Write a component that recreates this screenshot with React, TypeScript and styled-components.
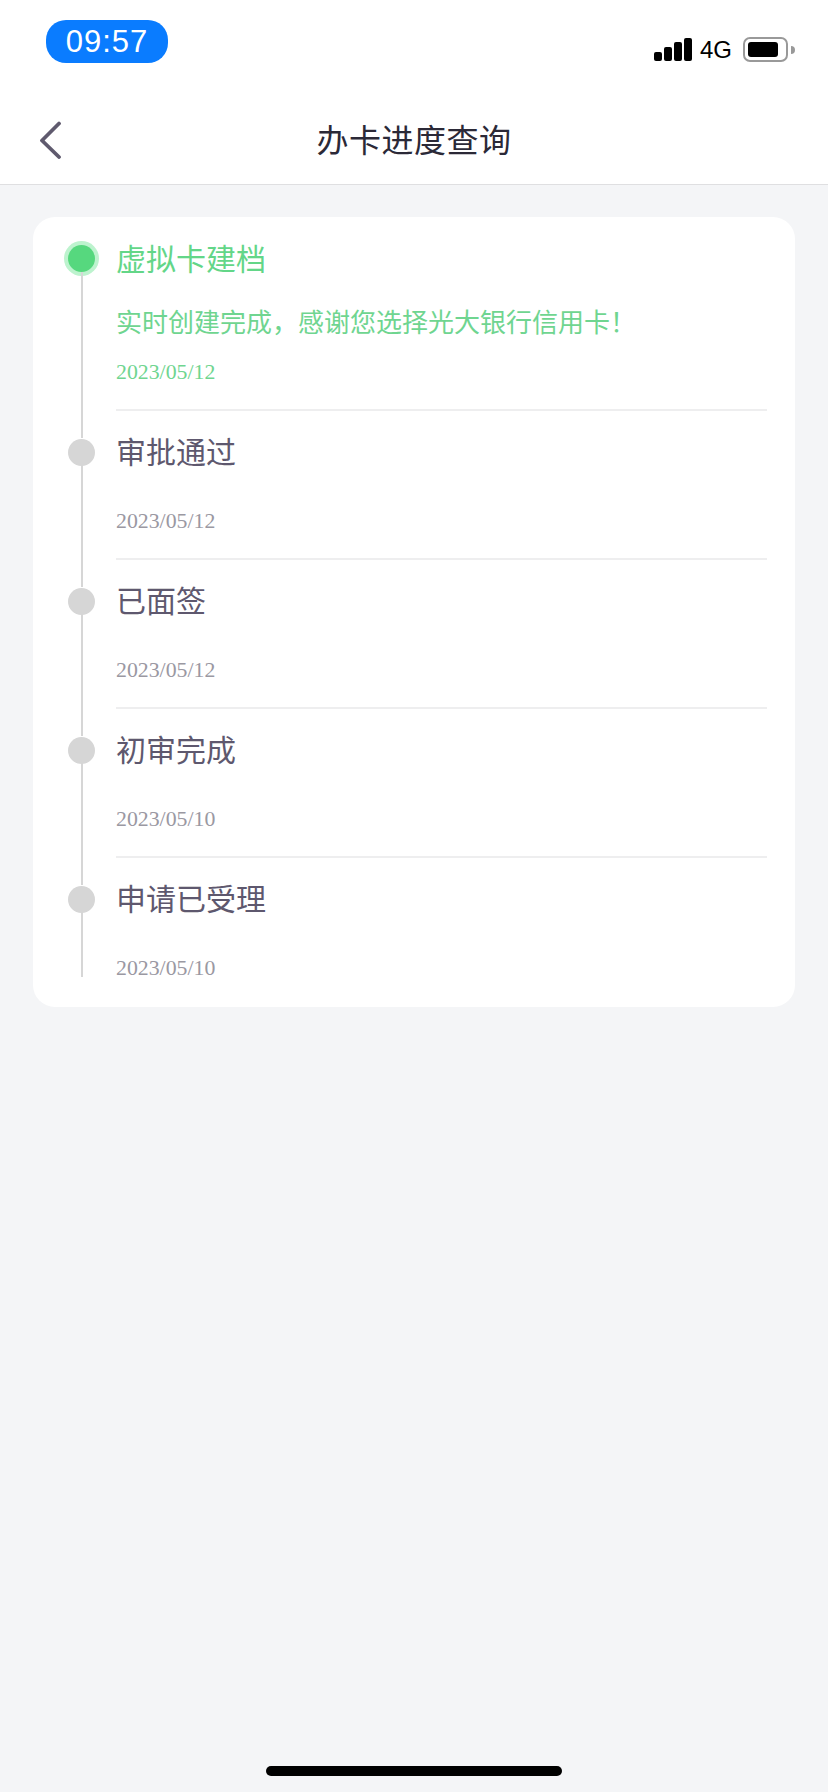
import React from 'react';
import styled, { createGlobalStyle } from 'styled-components';

interface Step {
  title: string;
  note?: string;
  date: string;
}

const steps: Step[] = [
  { title: '虚拟卡建档', note: '实时创建完成\uFF0C感谢您选择光大银行信用卡\uFF01', date: '2023/05/12' },
  { title: '审批通过', date: '2023/05/12' },
  { title: '已面签', date: '2023/05/12' },
  { title: '初审完成', date: '2023/05/10' },
  { title: '申请已受理', date: '2023/05/10' }
];

const signalHeights = [9, 14, 19, 23];

const App: React.FC = () => (
  <Page>
    <GlobalStyle />
    <TopArea>
      <StatusBar>
        <TimePill>09:57</TimePill>
        <StatusIcons>
          <Signal>
            {signalHeights.map((h) => (
              <SignalBar key={h} $height={h} />
            ))}
          </Signal>
          <Network>4G</Network>
          <Battery>
            <BatteryLevel />
          </Battery>
          <BatteryNub />
        </StatusIcons>
      </StatusBar>
      <NavBar>
        <BackButton aria-label="back">
          <svg width="24" height="38" viewBox="0 0 24 38" fill="none">
            <path
              d="M21 2.5 L4 19.5 L21 36"
              stroke="#5f5a6e"
              strokeWidth="3.8"
              strokeLinecap="round"
              strokeLinejoin="round"
            />
          </svg>
        </BackButton>
        <NavTitle>办卡进度查询</NavTitle>
        <span />
      </NavBar>
    </TopArea>
    <Content>
      <Card>
        {steps.map((step, i) => {
          const active = i === 0;
          const last = i === steps.length - 1;
          return (
            <StepRow key={step.title}>
              <Rail>
                <Dot $active={active} />
                <RailLine $last={last} />
              </Rail>
              <StepBody $last={last}>
                <StepTitle $active={active}>{step.title}</StepTitle>
                {step.note && <StepNote>{step.note}</StepNote>}
                <StepDate $active={active} $hasNote={!!step.note}>
                  {step.date}
                </StepDate>
              </StepBody>
            </StepRow>
          );
        })}
      </Card>
    </Content>
    <HomeIndicator />
  </Page>
);

const GlobalStyle = createGlobalStyle`
  html, body {
    margin: 0;
    padding: 0;
    background: #f4f5f7;
  }
  * {
    box-sizing: border-box;
  }
`;

const Page = styled.div`
  width: 828px;
  height: 1792px;
  display: flex;
  flex-direction: column;
  background: #f4f5f7;
  font-family: 'Noto Sans CJK SC', 'Liberation Sans', sans-serif;
`;

const TopArea = styled.header`
  background: #fff;
  border-bottom: 1px solid #dfdfe1;
  height: 185px;
`;

const StatusBar = styled.div`
  height: 90px;
  display: flex;
  justify-content: space-between;
  align-items: flex-start;
  padding: 20px 33px 0 46px;
`;

const TimePill = styled.div`
  width: 122px;
  height: 43px;
  border-radius: 20px;
  background: #0a7cff;
  color: #fff;
  font-family: 'Liberation Sans', Arial, sans-serif;
  font-size: 31px;
  letter-spacing: 1px;
  line-height: 43px;
  text-align: center;
`;

const StatusIcons = styled.div`
  display: flex;
  align-items: center;
  height: 25px;
  margin-top: 17px;
`;

const Signal = styled.div`
  display: flex;
  align-items: flex-end;
  gap: 2px;
  height: 23px;
  margin-right: 8px;
`;

const SignalBar = styled.i<{ $height: number }>`
  display: block;
  width: 8px;
  height: ${(p) => p.$height}px;
  background: #000;
  border-radius: 2px;
`;

const Network = styled.span`
  width: 33px;
  margin-right: 10px;
  font-family: 'Liberation Sans', Arial, sans-serif;
  font-size: 24px;
  line-height: 25px;
  color: #000;
`;

const Battery = styled.div`
  width: 45px;
  height: 25px;
  padding: 3px;
  border: 2px solid #999;
  border-radius: 7px;
`;

const BatteryLevel = styled.div`
  width: 30px;
  height: 15px;
  background: #000;
  border-radius: 3px;
`;

const BatteryNub = styled.div`
  width: 4px;
  height: 8px;
  margin-left: 3px;
  background: #999;
  border-radius: 0 4px 4px 0;
`;

const NavBar = styled.nav`
  height: 94px;
  padding: 6px 0 0 38px;
  display: grid;
  grid-template-columns: 1fr auto 1fr;
  align-items: center;
`;

const BackButton = styled.button`
  display: flex;
  width: 40px;
  padding: 0;
  border: 0;
  background: none;
`;

const NavTitle = styled.h1`
  margin: 0 0 4px -38px;
  font-size: 32px;
  font-weight: 400;
  letter-spacing: 0.5px;
  line-height: 44px;
  color: #2b2937;
`;

const Content = styled.main`
  flex: 1;
  padding: 32px 33px 0;
`;

const Card = styled.section`
  padding: 28px 28px 24px 35px;
  background: #fff;
  border-radius: 22px;
`;

const StepRow = styled.div`
  display: grid;
  grid-template-columns: 27px 1fr;
  column-gap: 21px;
`;

const Rail = styled.div`
  display: flex;
  flex-direction: column;
  align-items: center;
`;

const Dot = styled.div<{ $active?: boolean }>`
  flex: none;
  width: 27px;
  height: 27px;
  border-radius: 50%;
  background: ${(p) => (p.$active ? '#56d87e' : '#d6d6d6')};
  box-shadow: ${(p) => (p.$active ? '0 0 0 4px #bdf3ce' : 'none')};
  transform: ${(p) => (p.$active ? 'none' : 'translateY(1px)')};
`;

const RailLine = styled.div<{ $last?: boolean }>`
  flex: 1;
  width: 2px;
  background: #d6d6d6;
  margin-bottom: ${(p) => (p.$last ? '6px' : '0')};
`;

const StepBody = styled.div<{ $last?: boolean }>`
  padding-bottom: ${(p) => (p.$last ? '0' : '22px')};
  margin-bottom: ${(p) => (p.$last ? '0' : '27px')};
  border-bottom: ${(p) => (p.$last ? 'none' : '2px solid #eeeeef')};
`;

const StepTitle = styled.div<{ $active?: boolean }>`
  font-size: 30px;
  line-height: 24px;
  color: ${(p) => (p.$active ? '#63d688' : '#5e586e')};
`;

const StepNote = styled.div`
  margin-top: 34px;
  font-size: 26px;
  line-height: 36px;
  color: #6fd590;
  white-space: nowrap;
`;

const StepDate = styled.div<{ $active?: boolean; $hasNote?: boolean }>`
  margin-top: ${(p) => (p.$hasNote ? '18px' : '44px')};
  font-family: 'Liberation Serif', 'Times New Roman', serif;
  font-size: 21.8px;
  line-height: 30px;
  color: ${(p) => (p.$active ? '#6fd590' : '#9a98a2')};
`;

const HomeIndicator = styled.div`
  flex: none;
  align-self: center;
  width: 296px;
  height: 10px;
  margin-bottom: 16px;
  background: #000;
  border-radius: 5px;
`;

export default App;
